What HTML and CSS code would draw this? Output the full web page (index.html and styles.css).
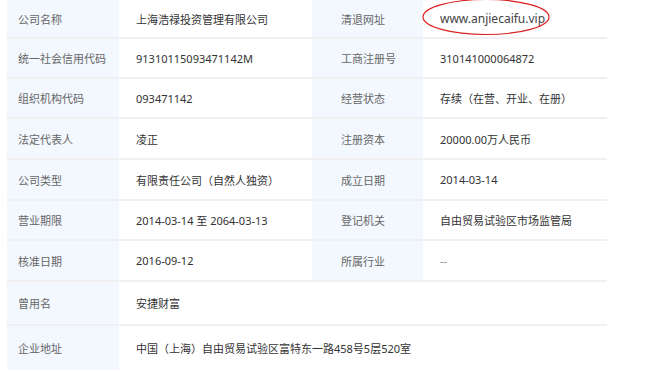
FILE: index.html
```html
<!DOCTYPE html>
<html lang="zh">
<head>
<meta charset="utf-8">
<link rel="stylesheet" href="styles.css">
</head>
<body>
<div class="info">
  <div class="row r39">
    <div class="lab">公司名称</div><div class="val">上海浩禄投资管理有限公司</div>
    <div class="lab lab2">清退网址</div><div class="val"><span class="circled">www.anjiecaifu.vip<svg class="ring" width="130" height="38" viewBox="0 0 130 38"><ellipse cx="65" cy="19" rx="63" ry="17.5" fill="none" stroke="#e02020" stroke-width="1.2"/></svg></span></div>
  </div>
  <div class="row r40">
    <div class="lab">统一社会信用代码</div><div class="val">91310115093471142M</div>
    <div class="lab lab2">工商注册号</div><div class="val">310141000064872</div>
  </div>
  <div class="row r40">
    <div class="lab">组织机构代码</div><div class="val">093471142</div>
    <div class="lab lab2">经营状态</div><div class="val">存续（在营、开业、在册）</div>
  </div>
  <div class="row r41">
    <div class="lab">法定代表人</div><div class="val">凌正</div>
    <div class="lab lab2">注册资本</div><div class="val">20000.00万人民币</div>
  </div>
  <div class="row r41">
    <div class="lab">公司类型</div><div class="val">有限责任公司（自然人独资）</div>
    <div class="lab lab2">成立日期</div><div class="val">2014-03-14</div>
  </div>
  <div class="row r40">
    <div class="lab">营业期限</div><div class="val">2014-03-14 至 2064-03-13</div>
    <div class="lab lab2">登记机关</div><div class="val">自由贸易试验区市场监管局</div>
  </div>
  <div class="row r41">
    <div class="lab">核准日期</div><div class="val">2016-09-12</div>
    <div class="lab lab2">所属行业</div><div class="val dash">--</div>
  </div>
  <div class="row r44">
    <div class="lab">曾用名</div><div class="val span3">安捷财富</div>
  </div>
  <div class="row r44 last">
    <div class="lab">企业地址</div><div class="val span3">中国（上海）自由贸易试验区富特东一路458号5层520室</div>
  </div>
</div>
</body>
</html>
```
FILE: styles.css
```css
html, body {
  margin: 0;
  padding: 0;
  background: #ffffff;
}
body {
  font-family: "Noto Sans", "Noto Sans CJK SC", sans-serif;
  font-size: 11px;
  overflow: hidden;
  text-spacing-trim: space-all;
}
.info {
  width: 600px;
  margin-left: 7px;
}
.row {
  display: grid;
  grid-template-columns: 112px 193px 111px 184px;
  box-sizing: border-box;
  border-bottom: 2px solid #f0f0f0;
}
.r39 { height: 39px; }
.r40 { height: 40px; }
.r41 { height: 41px; }
.r44 { height: 44px; }
.last { border-bottom: none; }
.lab {
  background: #f3f8fe;
  color: #666666;
  padding-left: 11px;
  display: flex;
  align-items: center;
  white-space: nowrap;
}
.lab2 {
  padding-left: 29px;
}
.val {
  color: #333333;
  padding-left: 17px;
  display: flex;
  align-items: center;
  white-space: nowrap;
}
.span3 {
  grid-column: 2 / 5;
}
.dash {
  color: #888888;
}
.circled {
  position: relative;
  display: inline-block;
  font-size: 12px;
  color: #444444;
}
.ring {
  position: absolute;
  left: -19px;
  top: -12px;
}
```
